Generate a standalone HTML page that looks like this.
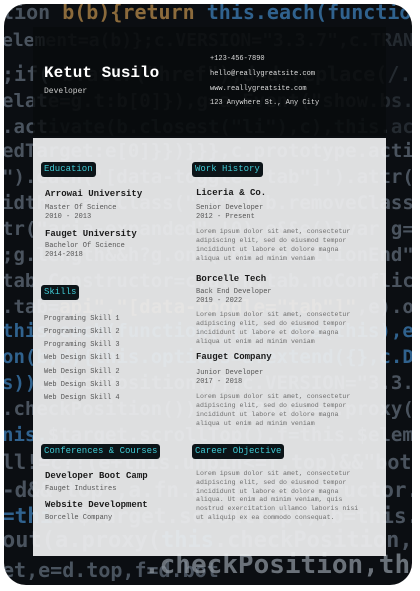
<!DOCTYPE html>
<html><head><meta charset="utf-8"><style>
*{margin:0;padding:0;box-sizing:border-box}
body{width:420px;height:591px;background:#fff;position:relative;overflow:hidden;font-family:"Liberation Mono","DejaVu Sans Mono",monospace}
#bg{position:absolute;left:4px;top:4px;width:408px;height:581px;border-radius:22px;background:#0b0e12;overflow:hidden}
#bg div{position:absolute;white-space:nowrap;font-family:"DejaVu Sans Mono",monospace;font-weight:bold;color:#5f6b78;opacity:.75}
.b{color:#3d7fb8!important}
.o{color:#b78a4a!important}
#hdr{position:absolute;left:33px;top:27px;width:353px;height:109px;background:rgba(8,10,12,.78)}
#panel{position:absolute;left:33px;top:138px;width:353px;height:418px;background:rgba(234,235,236,.95)}
.a{position:absolute;white-space:nowrap}
.tag{position:absolute;background:#0c1418;color:#3fc9d3;font-size:9px;padding:2px 3px;border-radius:3px;line-height:11px}
.h{font-weight:bold;font-size:9px;color:#1a1a1a}
.s{font-size:7px;color:#555}
.p{font-size:6.6px;color:#707070;line-height:9px}
.c{font-size:7px;color:#ddd}
</style></head><body>
<div id="bg">
<div style="left:-2px;top:-4px;font-size:20px">tion <span class="o">b(b){return</span> <span class="b">this.each(function(){</span></div>
<div style="left:-2px;top:26px;font-size:18px">elem<span style="opacity:.4">ent=a(b)};c.VERSION="3.3.7",c.TRANSITION</span></div>
<div style="left:-2px;top:58px;font-size:20px">;if( <span style="opacity:.4">b.attr("href"),d=d.replace(/.*</span></div>
<div style="left:-2px;top:86px;font-size:19px">elat<span style="opacity:.4">e=g.t:b[0]}),g=a.Event("show.bs.tab"</span></div>
<div style="left:-2px;top:112px;font-size:19px">.act<span style="opacity:.4">ivate(b.closest("li"),c),this.activate(</span></div>
<div style="left:-2px;top:136px;font-size:19px">edTarget:e[0]}})}}},c.prototype.activate=f</div>
<div style="left:-2px;top:162px;font-size:19px">").each('[data-toggle="tab"]').attr("</div>
<div style="left:-2px;top:188px;font-size:19px">idth,b.addClass("in")):b.removeClass("fade"</div>
<div style="left:-2px;top:214px;font-size:19px">tr("aria-expanded",!0),e&&e()}var g=d.fin</div>
<div style="left:-2px;top:240px;font-size:19px">;g.length&&h?g.one("bsTransitionEnd"</div>
<div style="left:-2px;top:266px;font-size:19px">tab.Constructor=c,a.fn.tab.noConflict=fun</div>
<div style="left:-2px;top:292px;font-size:19px">.tab=<span class="o">api","[data-toggle="tab"]"</span>,e).on</div>
<div style="left:-2px;top:316px;font-size:19px" class="b">this.each(function(){var d=a(this),e=d.dat</div>
<div style="left:-2px;top:342px;font-size:19px" class="b">on(b,d){this.options=a.extend({},c.DEFAULTS</div>
<div style="left:-2px;top:368px;font-size:19px"><span class="b">s))</span>.checkPosition()},c.VERSION="3.3.7",c.RESET</div>
<div style="left:-2px;top:394px;font-size:19px">.checkPosition());c.VERSION=a.proxy(</div>
<div style="left:-2px;top:420px;font-size:19px"><span class="b">nis.</span>$target.scrollTop(),f=this.$element.of</div>
<div style="left:-2px;top:446px;font-size:20px">ll!=c?!(e+this.unpin&lt;=f.top)&&"bottom":!(</div>
<div style="left:-2px;top:474px;font-size:21px">-d&amp;&amp;"top",a.fn.affix.Constructor.prototype</div>
<div style="left:-2px;top:500px;font-size:21px"><span class="b">=thi</span>s.$target.scrollTop(),b=this.$element.getOffset</div>
<div style="left:-2px;top:524px;font-size:22px">out(a.proxy(<span class="b">this</span>.checkPosition,this),$element</div>
<div style="left:-2px;top:554px;font-size:20px">et,e=d.top,f=d.bot</div>
<div style="left:140px;top:546px;font-size:26px;color:#8a939c">.checkPosition,this)</div>
</div>
<div id="hdr"></div>
<div class="a" style="left:44px;top:64px;font-size:16px;font-weight:bold;color:#fff">Ketut Susilo</div>
<div class="a" style="left:44px;top:87px;font-size:8px;color:#ccc">Developer</div>
<div class="a c" style="left:210px;top:55px">+123-456-7890</div>
<div class="a c" style="left:210px;top:70px">hello@reallygreatsite.com</div>
<div class="a c" style="left:210px;top:85px">www.reallygreatsite.com</div>
<div class="a c" style="left:210px;top:99px">123 Anywhere St., Any City</div>
<div id="panel"></div>

<div class="tag" style="left:41px;top:162px">Education</div>
<div class="a h" style="left:45px;top:189px">Arrowai University</div>
<div class="a s" style="left:45px;top:204px">Master Of Science</div>
<div class="a s" style="left:45px;top:213px">2010 - 2013</div>
<div class="a h" style="left:45px;top:229px">Fauget University</div>
<div class="a s" style="left:45px;top:242px">Bachelor Of Science</div>
<div class="a s" style="left:45px;top:251px">2014-2018</div>

<div class="tag" style="left:41px;top:285px">Skills</div>
<div class="a s" style="left:44px;top:315px">Programing Skill 1</div>
<div class="a s" style="left:44px;top:328px">Programing Skill 2</div>
<div class="a s" style="left:44px;top:341px">Programing Skill 3</div>
<div class="a s" style="left:44px;top:354px">Web Design Skill 1</div>
<div class="a s" style="left:44px;top:368px">Web Design Skill 2</div>
<div class="a s" style="left:44px;top:381px">Web Design Skill 3</div>
<div class="a s" style="left:44px;top:394px">Web Design Skill 4</div>

<div class="tag" style="left:41px;top:444px">Conferences &amp; Courses</div>
<div class="a h" style="left:45px;top:471px">Developer Boot Camp</div>
<div class="a s" style="left:45px;top:485px">Fauget Industires</div>
<div class="a h" style="left:45px;top:500px">Website Development</div>
<div class="a s" style="left:45px;top:514px">Borcelle Company</div>

<div class="tag" style="left:192px;top:162px">Work History</div>
<div class="a h" style="left:196px;top:188px">Liceria &amp; Co.</div>
<div class="a s" style="left:196px;top:204px">Senior Developer</div>
<div class="a s" style="left:196px;top:213px">2012 - Present</div>
<div class="a p" style="left:196px;top:227px">Lorem ipsum dolor sit amet, consectetur<br>adipiscing elit, sed do eiusmod tempor<br>incididunt ut labore et dolore magna<br>aliqua ut enim ad minim veniam</div>
<div class="a h" style="left:196px;top:274px">Borcelle Tech</div>
<div class="a s" style="left:196px;top:288px">Back End Developer</div>
<div class="a s" style="left:196px;top:297px">2019 - 2022</div>
<div class="a p" style="left:196px;top:310px">Lorem ipsum dolor sit amet, consectetur<br>adipiscing elit, sed do eiusmod tempor<br>incididunt ut labore et dolore magna<br>aliqua ut enim ad minim veniam</div>
<div class="a h" style="left:196px;top:352px">Fauget Company</div>
<div class="a s" style="left:196px;top:369px">Junior Developer</div>
<div class="a s" style="left:196px;top:378px">2017 - 2018</div>
<div class="a p" style="left:196px;top:392px">Lorem ipsum dolor sit amet, consectetur<br>adipiscing elit, sed do eiusmod tempor<br>incididunt ut labore et dolore magna<br>aliqua ut enim ad minim veniam</div>

<div class="tag" style="left:192px;top:444px">Career Objective</div>
<div class="a p" style="left:196px;top:470px;line-height:8.8px">Lorem ipsum dolor sit amet, consectetur<br>adipiscing elit, sed do eiusmod tempor<br>incididunt ut labore et dolore magna<br>aliqua. Ut enim ad minim veniam, quis<br>nostrud exercitation ullamco laboris nisi<br>ut aliquip ex ea commodo consequat.</div>
</body></html>
